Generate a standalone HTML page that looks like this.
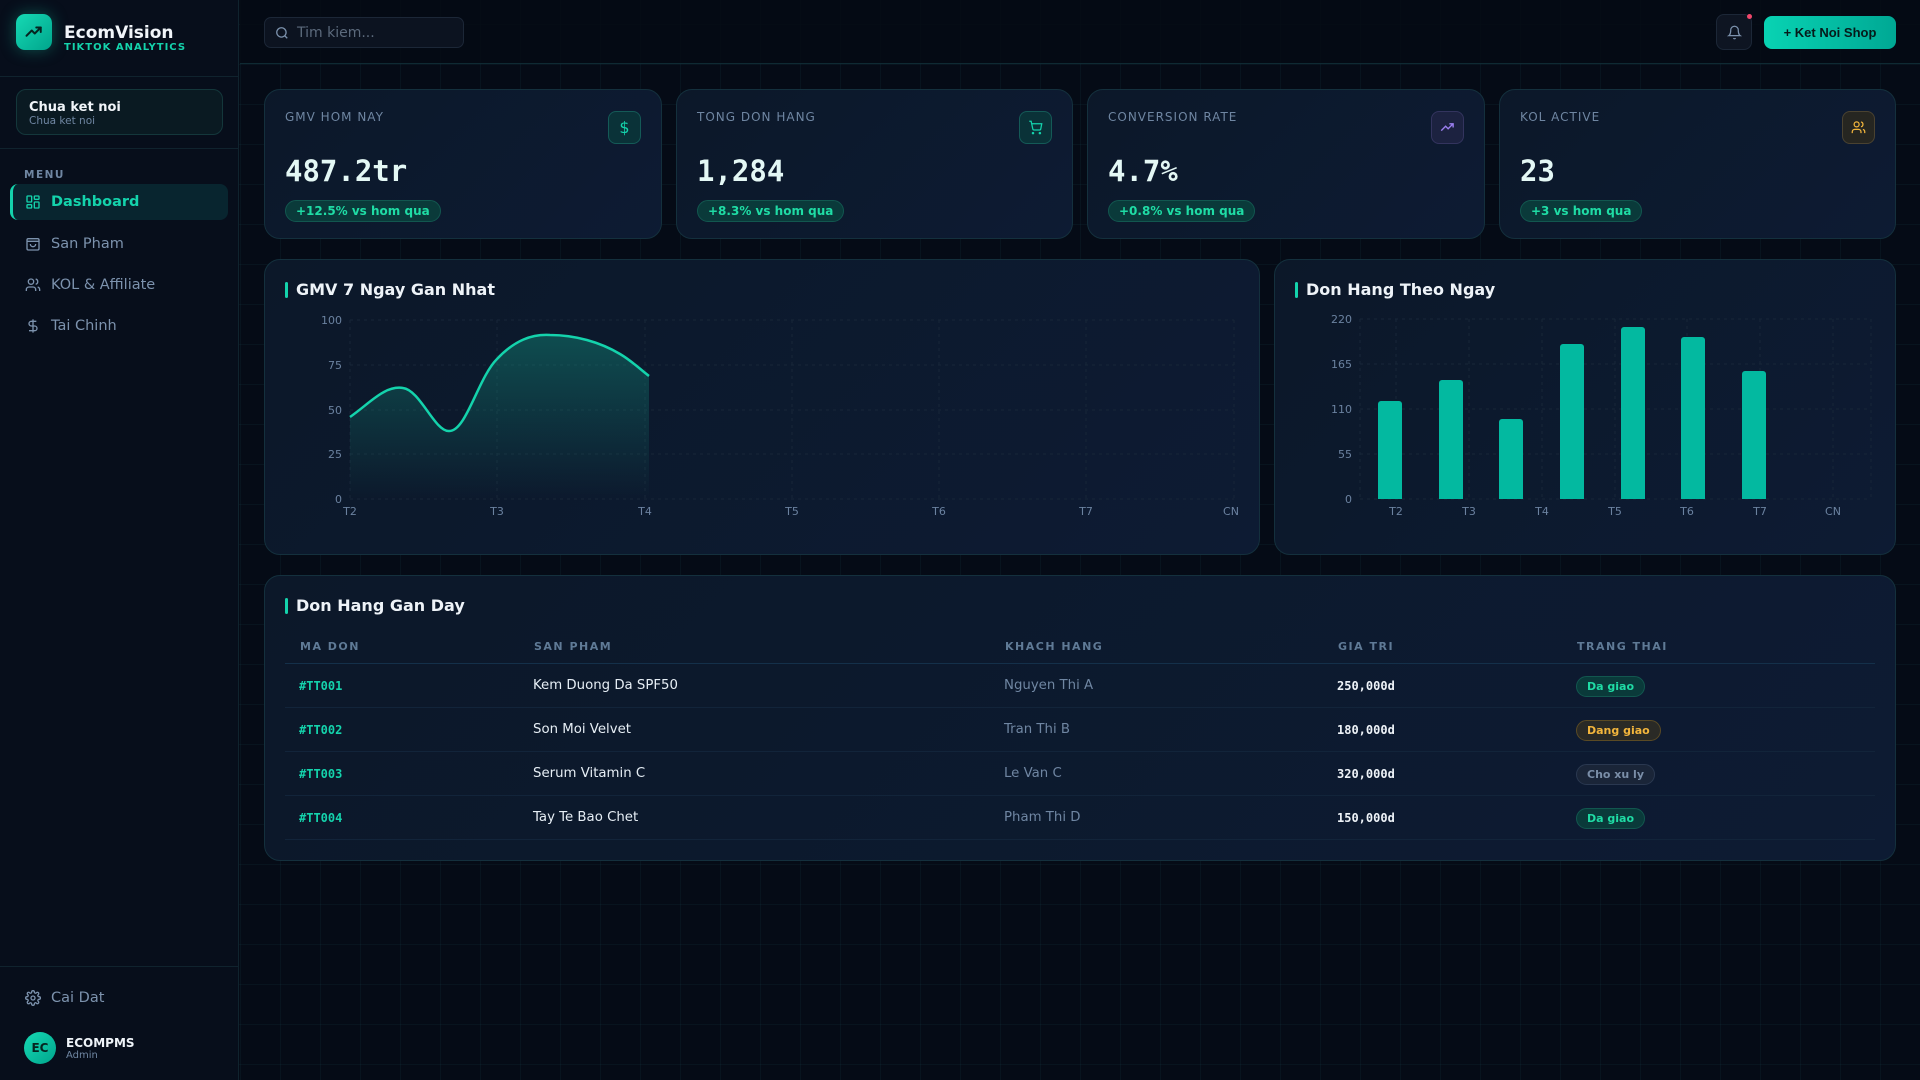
<!DOCTYPE html>
<html><head><meta charset="utf-8">
<style>
*{box-sizing:border-box;margin:0;padding:0}
body{width:1920px;height:1080px;overflow:hidden;font-family:"DejaVu Sans","Liberation Sans",sans-serif;color:#e6eef5;
background-color:#050b16;
background-image:linear-gradient(rgba(30,80,90,.13) 1px,transparent 1px),linear-gradient(90deg,rgba(30,80,90,.13) 1px,transparent 1px);
background-size:40px 40px;background-position:0 24px;position:relative}
.abs{position:absolute}
.side{position:absolute;left:0;top:0;width:239px;height:1080px;background:#070e1b;border-right:1px solid #10232e}
.hdr{position:absolute;left:240px;top:0;width:1680px;height:64px;background:rgba(5,10,20,.85);border-bottom:1px solid #0f2a33}
.card{position:absolute;border:1px solid #14303d;border-radius:16px;background:linear-gradient(135deg,#0c1829,#0d1b33)}
.lbl{position:absolute;left:20px;top:20px;font-size:12px;letter-spacing:1px;color:#6f86a2}
.ico{position:absolute;right:20px;top:21px;width:33px;height:33px;border-radius:8px;display:flex;align-items:center;justify-content:center}
.val{position:absolute;left:20px;top:64px;font-family:"DejaVu Sans Mono",monospace;font-weight:bold;font-size:29px;color:#e4f8f5}
.bdg{position:absolute;left:20px;top:110px;height:22px;padding:0 10px;border-radius:11px;background:#0a3a3a;border:1px solid #12574f;color:#1fdca5;font-weight:bold;font-size:12px;line-height:20px}
.ttl{position:absolute;left:20px;top:20px;font-size:16px;font-weight:bold;color:#eef3f8;padding-left:11px}
.ttl:before{content:"";position:absolute;left:0;top:2px;width:3px;height:16px;background:#14d3ac;border-radius:2px}
.nav{position:absolute;left:10px;width:218px;height:36px;border-radius:8px;font-size:14.5px;color:#7c92ad;line-height:36px;padding-left:41px}
.nav svg{position:absolute;left:15px;top:10px}
.th{position:absolute;font-size:11px;font-weight:bold;letter-spacing:1.5px;color:#5f7a96;top:64px}
.td{position:absolute;font-size:13.3px}
.code{font-family:"DejaVu Sans Mono",monospace;font-weight:bold;font-size:12px;color:#14d3ac}
.money{font-family:"DejaVu Sans Mono",monospace;font-weight:bold;font-size:12px;color:#eef3f8}
.st{position:absolute;height:21px;line-height:19px;padding:0 10px;border-radius:11px;font-size:11px;font-weight:bold}
.g{background:#0a3a3a;border:1px solid #12574f;color:#1fdca5}
.y{background:#2a2a26;border:1px solid #5a4a24;color:#f2b53c}
.p{background:#1a2538;border:1px solid #2a3850;color:#7a8ea8}
.rl{position:absolute;left:20px;width:1590px;height:1px;background:#12243a}
</style></head><body>

<div class="side">
  <div class="abs" style="left:16px;top:14px;width:36px;height:36px;border-radius:9px;background:linear-gradient(135deg,#16d9b4,#00a58c);box-shadow:0 0 16px rgba(20,211,172,.35);display:flex;align-items:center;justify-content:center">
    <svg width="18" height="18" viewBox="0 0 24 24" fill="none" stroke="#062420" stroke-width="2.6" stroke-linecap="round" stroke-linejoin="round"><path d="M2 17l7-7 4 4 8-8"/><path d="M15 6h6v6"/></svg>
  </div>
  <div class="abs" style="left:64px;top:23px;font-size:17px;font-weight:bold;color:#f1f5f9">EcomVision</div>
  <div class="abs" style="left:64px;top:42px;font-size:10px;font-weight:bold;letter-spacing:1px;color:#14d3ac">TIKTOK ANALYTICS</div>
  <div class="abs" style="left:0;top:76px;width:239px;height:1px;background:#10232e"></div>
  <div class="abs" style="left:16px;top:89px;width:207px;height:46px;border-radius:10px;border:1px solid #14373b;background:#0a1a22">
    <div class="abs" style="left:12px;top:10px;font-size:13px;font-weight:bold;color:#f1f5f9">Chua ket noi</div>
    <div class="abs" style="left:12px;top:25px;font-size:10.5px;color:#6f86a2">Chua ket noi</div>
  </div>
  <div class="abs" style="left:0;top:148px;width:239px;height:1px;background:#10232e"></div>
  <div class="abs" style="left:24px;top:169px;font-size:10.5px;font-weight:bold;letter-spacing:1.5px;color:#6f86a2">MENU</div>
  <div class="nav" style="top:184px;background:#08252f;color:#14d3ac;font-weight:bold;border-left:3px solid #14d3ac;padding-left:38px">
    <svg style="left:12px" width="16" height="16" viewBox="0 0 24 24" fill="none" stroke="#14d3ac" stroke-width="2"><rect x="3" y="3" width="7" height="9" rx="1"/><rect x="14" y="3" width="7" height="5" rx="1"/><rect x="14" y="12" width="7" height="9" rx="1"/><rect x="3" y="16" width="7" height="5" rx="1"/></svg>Dashboard</div>
  <div class="nav" style="top:226px"><svg width="16" height="16" viewBox="0 0 24 24" fill="none" stroke="#7c92ad" stroke-width="2"><rect x="3" y="4" width="18" height="17" rx="2"/><path d="M3 8h18M8 12a4 4 0 0 0 8 0"/></svg>San Pham</div>
  <div class="nav" style="top:267px"><svg width="16" height="16" viewBox="0 0 24 24" fill="none" stroke="#7c92ad" stroke-width="2"><circle cx="9" cy="7" r="4"/><path d="M2 21v-2a4 4 0 0 1 4-4h6a4 4 0 0 1 4 4v2M16 3.1a4 4 0 0 1 0 7.8M22 21v-2a4 4 0 0 0-3-3.9"/></svg>KOL &amp; Affiliate</div>
  <div class="nav" style="top:308px"><svg width="16" height="16" viewBox="0 0 24 24" fill="none" stroke="#7c92ad" stroke-width="2"><path d="M12 2v20M17 5H9.5a3.5 3.5 0 0 0 0 7h5a3.5 3.5 0 0 1 0 7H6"/></svg>Tai Chinh</div>
  <div class="abs" style="left:0;top:966px;width:239px;height:1px;background:#10232e"></div>
  <div class="nav" style="top:980px"><svg width="16" height="16" viewBox="0 0 24 24" fill="none" stroke="#7c92ad" stroke-width="2"><circle cx="12" cy="12" r="3"/><path d="M19.4 15a1.7 1.7 0 0 0 .3 1.8l.1.1a2 2 0 1 1-2.8 2.8l-.1-.1a1.7 1.7 0 0 0-2.9 1.2V21a2 2 0 1 1-4 0v-.1a1.7 1.7 0 0 0-2.9-1.2l-.1.1a2 2 0 1 1-2.8-2.8l.1-.1A1.7 1.7 0 0 0 3 14H3a2 2 0 1 1 0-4h.1a1.7 1.7 0 0 0 1.2-2.9l-.1-.1a2 2 0 1 1 2.8-2.8l.1.1A1.7 1.7 0 0 0 10 3V3a2 2 0 1 1 4 0v.1a1.7 1.7 0 0 0 2.9 1.2l.1-.1a2 2 0 1 1 2.8 2.8l-.1.1A1.7 1.7 0 0 0 21 10h.1a2 2 0 1 1 0 4h-.1a1.7 1.7 0 0 0-1.6 1z"/></svg>Cai Dat</div>
  <div class="abs" style="left:24px;top:1032px;width:32px;height:32px;border-radius:50%;background:linear-gradient(135deg,#16d9b4,#00a58c);color:#062420;font-size:12px;font-weight:bold;text-align:center;line-height:32px">EC</div>
  <div class="abs" style="left:66px;top:1036px;font-size:12px;font-weight:bold;color:#eef3f8">ECOMPMS</div>
  <div class="abs" style="left:66px;top:1050px;font-size:10px;color:#6f86a2">Admin</div>
</div>

<div class="hdr">
  <div class="abs" style="left:24px;top:17px;width:200px;height:31px;border-radius:7px;border:1px solid #1c2737;background:#0c1320">
    <svg class="abs" style="left:10px;top:8px" width="14" height="14" viewBox="0 0 24 24" fill="none" stroke="#7c92ad" stroke-width="2.2"><circle cx="11" cy="11" r="8"/><path d="M21 21l-4.3-4.3"/></svg>
    <div class="abs" style="left:32px;top:7px;font-size:14px;color:#5c6a7c">Tim kiem...</div>
  </div>
  <div class="abs" style="left:1476px;top:14px;width:36px;height:36px;border-radius:8px;border:1px solid #1c2737;background:#0e1522">
    <svg class="abs" style="left:10px;top:10px" width="15" height="15" viewBox="0 0 24 24" fill="none" stroke="#7c92ad" stroke-width="2"><path d="M6 8a6 6 0 0 1 12 0c0 7 3 9 3 9H3s3-2 3-9M10.3 21a1.9 1.9 0 0 0 3.4 0"/></svg>
    <div class="abs" style="left:30px;top:-1px;width:5px;height:5px;border-radius:50%;background:#f0476b"></div>
  </div>
  <div class="abs" style="left:1524px;top:16px;width:132px;height:33px;border-radius:8px;background:linear-gradient(90deg,#08d3b3,#00a894);color:#061a1a;font-size:13px;font-weight:bold;font-family:'Liberation Sans',sans-serif;text-align:center;line-height:33px">+ Ket Noi Shop</div>
</div>

<!-- stat cards -->
<div class="card" style="left:264px;top:89px;width:398px;height:150px">
  <div class="lbl">GMV HOM NAY</div>
  <div class="ico" style="background:#0a3238;border:1px solid #145a57"><span style="color:#14d3ac;font-size:16px">$</span></div>
  <div class="val">487.2tr</div><div class="bdg">+12.5% vs hom qua</div>
</div>
<div class="card" style="left:676px;top:89px;width:397px;height:150px">
  <div class="lbl">TONG DON HANG</div>
  <div class="ico" style="background:#0a3238;border:1px solid #145a57"><svg width="15" height="15" viewBox="0 0 24 24" fill="none" stroke="#14d3ac" stroke-width="2"><circle cx="8" cy="21" r="1"/><circle cx="19" cy="21" r="1"/><path d="M2 2h3l2.7 12.4a2 2 0 0 0 2 1.6h8.7a2 2 0 0 0 2-1.6L22 6H5.1"/></svg></div>
  <div class="val">1,284</div><div class="bdg">+8.3% vs hom qua</div>
</div>
<div class="card" style="left:1087px;top:89px;width:398px;height:150px">
  <div class="lbl">CONVERSION RATE</div>
  <div class="ico" style="background:#1c2240;border:1px solid #33345e"><svg width="15" height="15" viewBox="0 0 24 24" fill="none" stroke="#9b7ff0" stroke-width="2.2"><path d="M2 17l7-7 4 4 8-8"/><path d="M15 6h6v6"/></svg></div>
  <div class="val">4.7%</div><div class="bdg">+0.8% vs hom qua</div>
</div>
<div class="card" style="left:1499px;top:89px;width:397px;height:150px">
  <div class="lbl">KOL ACTIVE</div>
  <div class="ico" style="background:#262621;border:1px solid #4a4230"><svg width="15" height="15" viewBox="0 0 24 24" fill="none" stroke="#f2b53c" stroke-width="2"><circle cx="9" cy="7" r="4"/><path d="M2 21v-2a4 4 0 0 1 4-4h6a4 4 0 0 1 4 4v2M16 3.1a4 4 0 0 1 0 7.8M22 21v-2a4 4 0 0 0-3-3.9"/></svg></div>
  <div class="val">23</div><div class="bdg">+3 vs hom qua</div>
</div>

<!-- chart cards -->
<div class="card" style="left:264px;top:259px;width:996px;height:296px">
  <div class="ttl">GMV 7 Ngay Gan Nhat</div>
</div>
<div class="card" style="left:1274px;top:259px;width:622px;height:296px">
  <div class="ttl">Don Hang Theo Ngay</div>
</div>
<svg class="abs" style="left:0;top:0" width="1920" height="1080" font-family="DejaVu Sans" font-size="11" fill="#6b82a0">
  <defs><linearGradient id="ga" x1="0" y1="0" x2="0" y2="1"><stop offset="0" stop-color="#14d3ac" stop-opacity=".28"/><stop offset="1" stop-color="#14d3ac" stop-opacity="0"/></linearGradient></defs>
  <g stroke="#172638" stroke-dasharray="3 4" stroke-width="1">
    <line x1="350" y1="320" x2="1234" y2="320"/><line x1="350" y1="365" x2="1234" y2="365"/><line x1="350" y1="410" x2="1234" y2="410"/><line x1="350" y1="454" x2="1234" y2="454"/><line x1="350" y1="499" x2="1234" y2="499"/>
    <line x1="350" y1="320" x2="350" y2="499"/><line x1="497" y1="320" x2="497" y2="499"/><line x1="645" y1="320" x2="645" y2="499"/><line x1="792" y1="320" x2="792" y2="499"/><line x1="939" y1="320" x2="939" y2="499"/><line x1="1086" y1="320" x2="1086" y2="499"/><line x1="1234" y1="320" x2="1234" y2="499"/>
  </g>
  <g text-anchor="end"><text x="342" y="324">100</text><text x="342" y="369">75</text><text x="342" y="414">50</text><text x="342" y="458">25</text><text x="342" y="503">0</text></g>
  <g text-anchor="middle"><text x="350" y="515">T2</text><text x="497" y="515">T3</text><text x="645" y="515">T4</text><text x="792" y="515">T5</text><text x="939" y="515">T6</text><text x="1086" y="515">T7</text><text x="1231" y="515">CN</text></g>
  <path d="M350 417 C370 403,385 385,403 388 C420 390,435 432,449 431 C466 432,478 378,497 359 C515 340,532 334,550 335 C575 335,600 342,620 354 C632 361,641 370,649 376 L649 499 L350 499Z" fill="url(#ga)"/>
  <path d="M350 417 C370 403,385 385,403 388 C420 390,435 432,449 431 C466 432,478 378,497 359 C515 340,532 334,550 335 C575 335,600 342,620 354 C632 361,641 370,649 376" fill="none" stroke="#14d3ac" stroke-width="2.5"/>

  <g stroke="#172638" stroke-dasharray="3 4">
    <line x1="1360" y1="319" x2="1871" y2="319"/><line x1="1360" y1="364" x2="1871" y2="364"/><line x1="1360" y1="409" x2="1871" y2="409"/><line x1="1360" y1="454" x2="1871" y2="454"/><line x1="1360" y1="499" x2="1871" y2="499"/>
    <line x1="1360" y1="319" x2="1360" y2="499"/><line x1="1396" y1="319" x2="1396" y2="499"/><line x1="1469" y1="319" x2="1469" y2="499"/><line x1="1542" y1="319" x2="1542" y2="499"/><line x1="1615" y1="319" x2="1615" y2="499"/><line x1="1687" y1="319" x2="1687" y2="499"/><line x1="1760" y1="319" x2="1760" y2="499"/><line x1="1833" y1="319" x2="1833" y2="499"/><line x1="1871" y1="319" x2="1871" y2="499"/>
  </g>
  <g text-anchor="end"><text x="1352" y="323">220</text><text x="1352" y="368">165</text><text x="1352" y="413">110</text><text x="1352" y="458">55</text><text x="1352" y="503">0</text></g>
  <g text-anchor="middle"><text x="1396" y="515">T2</text><text x="1469" y="515">T3</text><text x="1542" y="515">T4</text><text x="1615" y="515">T5</text><text x="1687" y="515">T6</text><text x="1760" y="515">T7</text><text x="1833" y="515">CN</text></g>
  <g fill="#03b9a0">
    <path d="M1378 499V404a3 3 0 0 1 3-3h18a3 3 0 0 1 3 3V499Z"/>
    <path d="M1439 499V383a3 3 0 0 1 3-3h18a3 3 0 0 1 3 3V499Z"/>
    <path d="M1499 499V422a3 3 0 0 1 3-3h18a3 3 0 0 1 3 3V499Z"/>
    <path d="M1560 499V347a3 3 0 0 1 3-3h18a3 3 0 0 1 3 3V499Z"/>
    <path d="M1621 499V330a3 3 0 0 1 3-3h18a3 3 0 0 1 3 3V499Z"/>
    <path d="M1681 499V340a3 3 0 0 1 3-3h18a3 3 0 0 1 3 3V499Z"/>
    <path d="M1742 499V374a3 3 0 0 1 3-3h18a3 3 0 0 1 3 3V499Z"/>
  </g>
</svg>

<!-- table -->
<div class="card" style="left:264px;top:575px;width:1632px;height:286px">
  <div class="ttl">Don Hang Gan Day</div>
  <div class="th" style="left:35px">MA DON</div>
  <div class="th" style="left:269px">SAN PHAM</div>
  <div class="th" style="left:740px">KHACH HANG</div>
  <div class="th" style="left:1073px">GIA TRI</div>
  <div class="th" style="left:1312px">TRANG THAI</div>
  <div class="rl" style="top:87px;background:#14304a"></div>
  <div class="rl" style="top:131px"></div><div class="rl" style="top:175px"></div><div class="rl" style="top:219px"></div><div class="rl" style="top:263px"></div>

  <div class="td code" style="left:34px;top:103px">#TT001</div>
  <div class="td" style="left:268px;top:102px;color:#e6eef5">Kem Duong Da SPF50</div>
  <div class="td" style="left:739px;top:102px;color:#6f86a2">Nguyen Thi A</div>
  <div class="td money" style="left:1072px;top:103px">250,000d</div>
  <div class="st g" style="left:1311px;top:100px">Da giao</div>

  <div class="td code" style="left:34px;top:147px">#TT002</div>
  <div class="td" style="left:268px;top:146px;color:#e6eef5">Son Moi Velvet</div>
  <div class="td" style="left:739px;top:146px;color:#6f86a2">Tran Thi B</div>
  <div class="td money" style="left:1072px;top:147px">180,000d</div>
  <div class="st y" style="left:1311px;top:144px">Dang giao</div>

  <div class="td code" style="left:34px;top:191px">#TT003</div>
  <div class="td" style="left:268px;top:190px;color:#e6eef5">Serum Vitamin C</div>
  <div class="td" style="left:739px;top:190px;color:#6f86a2">Le Van C</div>
  <div class="td money" style="left:1072px;top:191px">320,000d</div>
  <div class="st p" style="left:1311px;top:188px">Cho xu ly</div>

  <div class="td code" style="left:34px;top:235px">#TT004</div>
  <div class="td" style="left:268px;top:234px;color:#e6eef5">Tay Te Bao Chet</div>
  <div class="td" style="left:739px;top:234px;color:#6f86a2">Pham Thi D</div>
  <div class="td money" style="left:1072px;top:235px">150,000d</div>
  <div class="st g" style="left:1311px;top:232px">Da giao</div>
</div>
</body></html>
